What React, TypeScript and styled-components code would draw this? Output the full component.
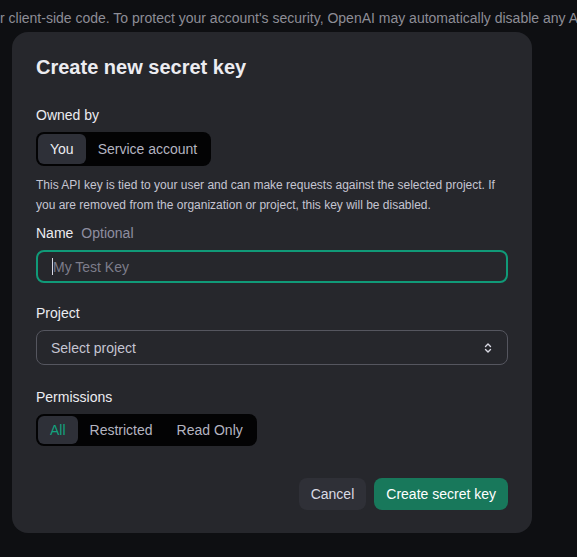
import React from 'react';
import styled, { createGlobalStyle } from 'styled-components';

const GlobalStyle = createGlobalStyle`
  html, body {
    margin: 0;
    padding: 0;
    background: #0e0f12;
    font-family: "Liberation Sans", Arial, sans-serif;
    -webkit-font-smoothing: antialiased;
  }
`;

const Page = styled.div`
  width: 577px;
  height: 557px;
  overflow: hidden;
  background: #0e0f12;
`;

const BackdropText = styled.p`
  margin: 0;
  padding-top: 8px;
  height: 24px;
  line-height: 20px;
  font-size: 14px;
  color: #8d8d96;
  white-space: nowrap;
  overflow: hidden;
`;

const Modal = styled.div`
  margin: 0 0 0 12px;
  width: 520px;
  box-sizing: border-box;
  padding: 22px 24px 23px;
  background: #26272c;
  border-radius: 16px;
  display: flex;
  flex-direction: column;
`;

const Title = styled.h2`
  margin: 0 0 25px;
  font-size: 20px;
  line-height: 26px;
  font-weight: 700;
  color: #ececf1;
`;

const Label = styled.div`
  font-size: 14px;
  line-height: 20px;
  font-weight: 400;
  color: #ececf1;
  margin-bottom: 7px;
  display: flex;
  gap: 8px;
`;

const Muted = styled.span`
  color: #8e8ea0;
`;

const Segmented = styled.div`
  align-self: flex-start;
  display: inline-flex;
  padding: 2px;
  background: #030304;
  border-radius: 8px;
`;

const Segment = styled.button<{ $active?: boolean; $accent?: boolean; $compact?: boolean }>`
  border: 0;
  font-family: inherit;
  font-size: 14px;
  line-height: 20px;
  font-weight: 400;
  padding: ${(p) => (p.$compact ? '4px 12px' : '5px 12px')};
  border-radius: 6px;
  background: ${(p) => (p.$active ? '#2e3038' : 'transparent')};
  color: ${(p) => (p.$active && p.$accent ? '#12a37f' : p.$active ? '#ececf1' : '#b4b4c0')};
`;

const Help = styled.p`
  margin: 9px 0 8px;
  font-size: 12px;
  line-height: 20px;
  color: #c5c5d2;
`;

const Field = styled.div<{ $gap?: number }>`
  display: flex;
  flex-direction: column;
  margin-bottom: ${(p) => p.$gap ?? 20}px;
`;

const Input = styled.div`
  height: 33px;
  box-sizing: border-box;
  border: 2px solid #109a78;
  border-radius: 8px;
  padding: 0 14px;
  display: flex;
  align-items: center;
  font-size: 14px;
  color: #7d7d8a;
`;

const Caret = styled.span`
  width: 1px;
  height: 17px;
  background: #d9d9e3;
`;

const Select = styled.div`
  height: 35px;
  box-sizing: border-box;
  border: 1px solid #55565f;
  border-radius: 8px;
  padding: 0 14px;
  display: flex;
  align-items: center;
  justify-content: space-between;
  font-size: 14px;
  color: #c5c5d2;
`;

const Actions = styled.div`
  display: flex;
  justify-content: flex-end;
  gap: 8px;
  margin-top: 32px;
`;

const Button = styled.button<{ $primary?: boolean }>`
  border: 0;
  height: 32px;
  padding: 0 12px;
  border-radius: 8px;
  font-family: inherit;
  font-size: 14px;
  font-weight: 400;
  background: ${(p) => (p.$primary ? '#18785b' : '#2f3037')};
  color: ${(p) => (p.$primary ? '#ffffff' : '#d9d9e3')};
`;

function Chevrons() {
  return (
    <svg width="10" height="12" viewBox="0 0 10 12" fill="none" stroke="#d9d9e3" strokeWidth="1.4" strokeLinecap="round" strokeLinejoin="round">
      <path d="M2.5 4.5 5 2l2.5 2.5" />
      <path d="M2.5 7.5 5 10l2.5-2.5" />
    </svg>
  );
}

export default function App() {
  return (
    <Page>
      <GlobalStyle />
      <BackdropText>
        r client-side code. To protect your account's security, OpenAI may automatically disable any API key
      </BackdropText>
      <Modal>
        <Title>Create new secret key</Title>

        <Label>Owned by</Label>
        <Segmented>
          <Segment $active>You</Segment>
          <Segment>Service account</Segment>
        </Segmented>
        <Help>
          This API key is tied to your user and can make requests against the selected project. If you are removed from the organization or project, this key will be disabled.
        </Help>

        <Field $gap={20}>
          <Label>
            Name <Muted>Optional</Muted>
          </Label>
          <Input>
            <Caret />
            My Test Key
          </Input>
        </Field>

        <Field $gap={22}>
          <Label>Project</Label>
          <Select>
            Select project
            <Chevrons />
          </Select>
        </Field>

        <Field $gap={0}>
          <Label>Permissions</Label>
          <Segmented>
            <Segment $active $accent $compact>All</Segment>
            <Segment $compact>Restricted</Segment>
            <Segment $compact>Read Only</Segment>
          </Segmented>
        </Field>

        <Actions>
          <Button>Cancel</Button>
          <Button $primary>Create secret key</Button>
        </Actions>
      </Modal>
    </Page>
  );
}
